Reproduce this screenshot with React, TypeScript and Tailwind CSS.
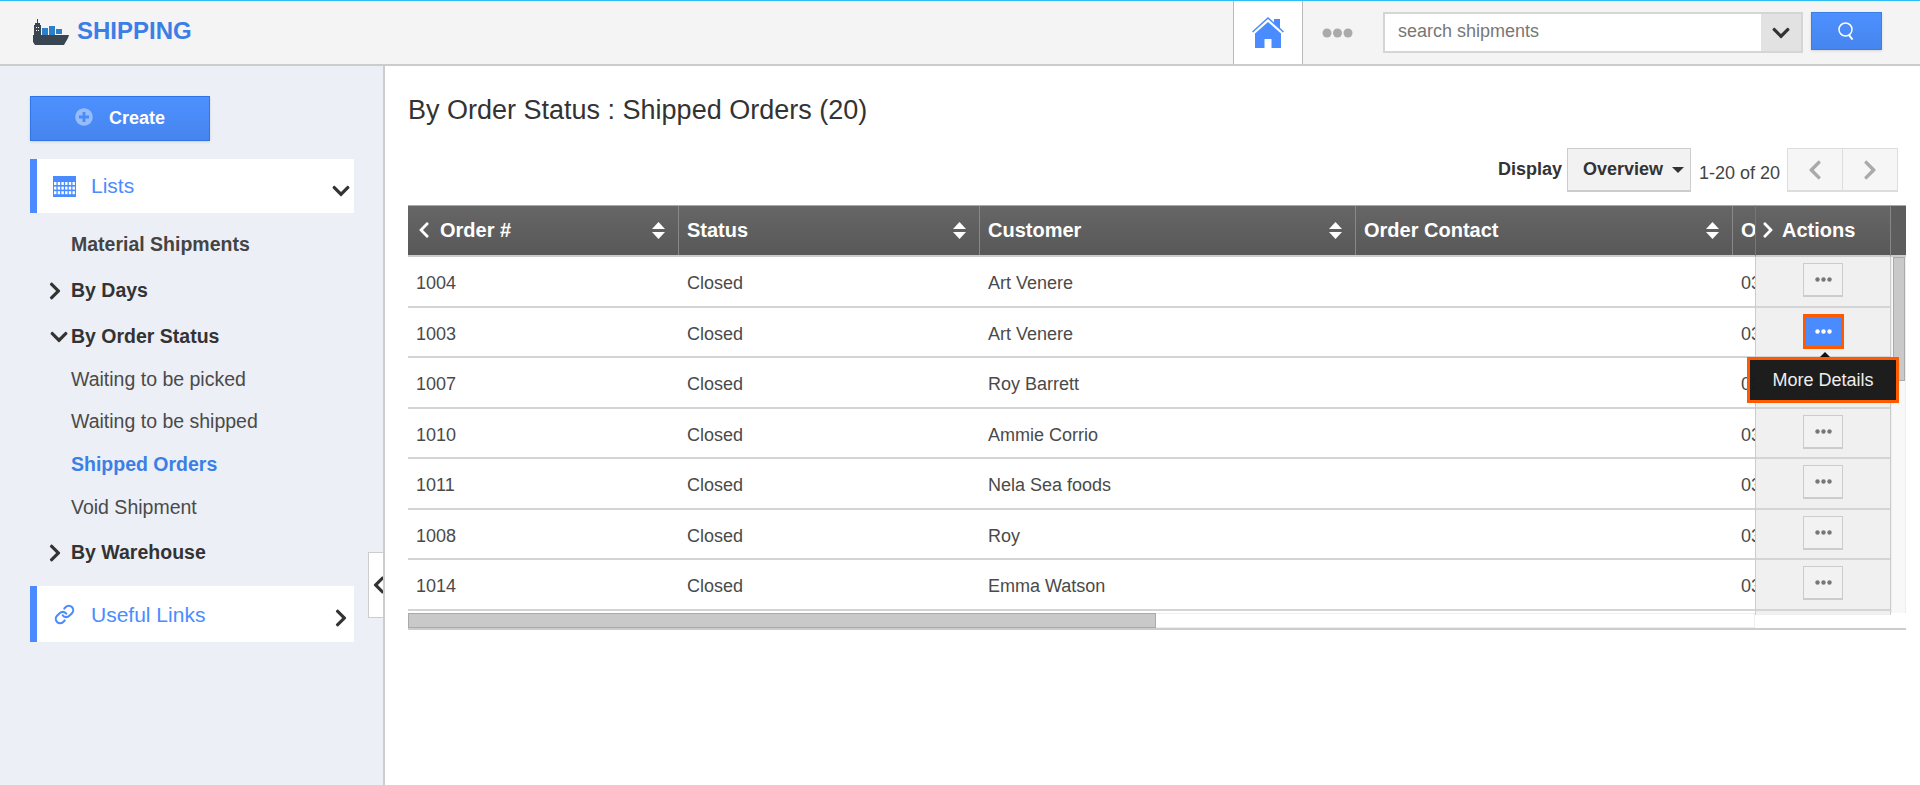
import { FaChevronDown, FaChevronLeft, FaChevronRight, FaPlusCircle } from "react-icons/fa";
import { Link } from "lucide-react";

const rows = [
  { id: "1004", customer: "Art Venere", h: "h-[51px]" },
  { id: "1003", customer: "Art Venere", h: "h-[50px]" },
  { id: "1007", customer: "Roy Barrett", h: "h-[51px]" },
  { id: "1010", customer: "Ammie Corrio", h: "h-[50px]" },
  { id: "1011", customer: "Nela Sea foods", h: "h-[51px]" },
  { id: "1008", customer: "Roy", h: "h-[50px]" },
  { id: "1014", customer: "Emma Watson", h: "h-[51px]" },
];

function ShipLogo() {
  return (
    <svg width="36" height="27" viewBox="0 0 36 27">
      <rect x="4" y="0" width="1" height="6" fill="#3a4552" />
      <rect x="2" y="4" width="5" height="2" fill="#3a4552" />
      <rect x="1" y="6" width="7" height="10" fill="#3a4552" />
      <rect x="3" y="8" width="1" height="1" fill="#fff" />
      <rect x="5" y="8" width="1" height="1" fill="#fff" />
      <rect x="3" y="11" width="1" height="1" fill="#fff" />
      <rect x="5" y="11" width="1" height="1" fill="#fff" />
      <rect x="9" y="9" width="6" height="7" fill="#2d7fc8" />
      <rect x="16" y="7" width="6" height="9" fill="#2d7fc8" />
      <rect x="23" y="10" width="6" height="5" fill="#2d7fc8" />
      <path d="M0 16 L36 16 L35 19 L31 26 L2 26 L0 23 Z" fill="#3a4552" />
    </svg>
  );
}

function HomeIcon() {
  return (
    <svg width="32" height="31" viewBox="0 0 32 31">
      <path d="M0.5 15 L16 1 L31.5 15" fill="none" stroke="#4a8cff" strokeWidth="1.5" />
      <path d="M22 2 h6 v10 l-6 -5.5 Z" fill="#4a8cff" />
      <path d="M16 5 L29 16.5 V31 H19.5 V22 H12.5 V31 H3 V16.5 Z" fill="#4a8cff" />
    </svg>
  );
}

function CalendarIcon() {
  return (
    <svg width="23" height="21" viewBox="0 0 23 21">
      <rect width="23" height="21" fill="#4a8cff" />
      {[0, 1, 2, 3, 4, 5].map((c) =>
        [0, 1, 2].map((r) => (
          <rect key={`${c}-${r}`} x={1 + c * 3.7} y={6 + r * 4.6} width="2.4" height="3" fill="#fff" />
        ))
      )}
    </svg>
  );
}

function SearchIcon() {
  return (
    <svg width="17" height="18" viewBox="0 0 17 18" fill="none" stroke="#fff" strokeWidth="1.5">
      <circle cx="7.5" cy="7.5" r="6.5" />
      <path d="M11 13 L14.5 17.5" strokeWidth="2" />
    </svg>
  );
}

function SortIcon() {
  return (
    <svg width="13" height="17" viewBox="0 0 13 17" fill="#fff">
      <path d="M6.5 0 L13 7 H0 Z" />
      <path d="M0 10 H13 L6.5 17 Z" />
    </svg>
  );
}

function Dots({ color }: { color: string }) {
  return (
    <svg width="17" height="5" viewBox="0 0 17 5" fill={color}>
      <circle cx="2.5" cy="2.5" r="2.2" />
      <circle cx="8.5" cy="2.5" r="2.2" />
      <circle cx="14.5" cy="2.5" r="2.2" />
    </svg>
  );
}

function SideHead({ label, chevron, icon, h, labelClass = "" }: { label: string; chevron: React.ReactNode; icon: React.ReactNode; h: string; labelClass?: string }) {
  return (
    <div className={`flex ${h} w-[324px] items-center border-l-[7px] border-[#4a8cff] bg-white`}>
      <div className="flex w-[54px] justify-center">{icon}</div>
      <span className={`flex-1 text-[21px] text-[#4a8cff] ${labelClass}`}>{label}</span>
      <div className="mr-[3px] text-[#333]">{chevron}</div>
    </div>
  );
}

function HeadCell({ label, w, before, sort = true }: { label: string; w: string; before?: React.ReactNode; sort?: boolean }) {
  return (
    <div className={`flex h-full ${w} shrink-0 items-center border-r border-[#888] pr-[13px]`}>
      {before}
      <span className={`mb-[2px] flex-1 whitespace-nowrap text-[20px] font-bold text-white ${before ? "ml-[7px]" : "pl-[8px]"}`}>
        {label}
      </span>
      {sort && <SortIcon />}
    </div>
  );
}

function Cell({ w, text }: { w: string; text?: string }) {
  return (
    <div className={`flex h-full ${w} shrink-0 items-center border-r border-white pl-[8px] pt-[4px] text-[18px] text-[#4a4a4a]`}>
      {text}
    </div>
  );
}

export default function App() {
  return (
    <div className="flex h-[785px] flex-col overflow-hidden bg-white font-['Liberation_Sans',Arial,sans-serif]">
      {/* top bar */}
      <header className="flex h-[66px] shrink-0 items-center border-t border-b-2 border-t-[#2dbdf5] border-b-[#ccc] bg-[#f4f4f4]">
        <div className="ml-[33px] flex items-center">
          <ShipLogo />
          <span className="mb-[3px] ml-[8px] text-[24px] font-bold text-[#3b7fe6]">SHIPPING</span>
        </div>
        <div className="ml-auto flex h-full items-stretch pr-[38px]">
          <div className="flex w-[70px] items-center justify-center border-x border-[#bbb] bg-white">
            <HomeIcon />
          </div>
          <div className="ml-[19px] flex items-center">
            <svg width="31" height="10" viewBox="0 0 31 10" fill="#aaa">
              <circle cx="5" cy="5" r="4.5" />
              <circle cx="15.5" cy="5" r="4.5" />
              <circle cx="26" cy="5" r="4.5" />
            </svg>
          </div>
          <div className="ml-[30px] mt-[11px] flex h-[41px] w-[420px] border-2 border-[#d5d5d5] bg-white">
            <span className="flex-1 pl-[13px] pt-[4px] text-[18px] text-[#777]">search shipments</span>
            <div className="flex w-[40px] items-center justify-center bg-[#e2e2e2]">
              <FaChevronDown className="text-[20px] text-[#333]" />
            </div>
          </div>
          <div className="ml-[8px] mt-[11px] flex h-[38px] w-[71px] items-center justify-center border border-[#3b7fe6] bg-gradient-to-b from-[#4d90ff] to-[#4585ee] shadow-sm">
            <SearchIcon />
          </div>
        </div>
      </header>

      <div className="flex min-h-0 flex-1">
        {/* sidebar */}
        <aside className="relative w-[385px] shrink-0 border-r-2 border-[#ccc] bg-[#eceff5] pl-[30px] pt-[30px]">
          <div className="flex h-[45px] w-[180px] items-center justify-center border border-[#2f75e8] bg-gradient-to-b from-[#4d90ff] to-[#4585ee] shadow-sm">
            <FaPlusCircle className="mb-[4px] text-[18px] text-[#95bcfb]" />
            <span className="ml-[16px] text-[18px] font-bold text-white">Create</span>
          </div>

          <div className="mt-[18px]">
            <SideHead h="h-[54px]" label="Lists" icon={<CalendarIcon />} chevron={<FaChevronDown className="mt-[10px] text-[20px]" />} />
          </div>

          <div className="mt-[9px] text-[19.5px]">
            <div className="flex h-[46px] items-center pl-[41px] font-bold text-[#444]">Material Shipments</div>
            <div className="flex h-[46px] items-center font-bold text-[#333]">
              <FaChevronRight className="ml-[15px] text-[20px]" />
              <span className="ml-[6px]">By Days</span>
            </div>
            <div className="flex h-[45px] items-center font-bold text-[#333]">
              <FaChevronDown className="ml-[19px] text-[20px]" />
              <span className="ml-[2px]">By Order Status</span>
            </div>
            <div className="flex h-[42px] items-center pl-[41px] text-[#4a4a4a]">Waiting to be picked</div>
            <div className="flex h-[42px] items-center pl-[41px] text-[#4a4a4a]">Waiting to be shipped</div>
            <div className="flex h-[44px] items-center pl-[41px] font-bold text-[#3b7fe6]">Shipped Orders</div>
            <div className="flex h-[42px] items-center pl-[41px] text-[#4a4a4a]">Void Shipment</div>
            <div className="mt-[1px] flex h-[46px] items-center font-bold text-[#333]">
              <FaChevronRight className="ml-[15px] text-[20px]" />
              <span className="ml-[6px]">By Warehouse</span>
            </div>
          </div>

          <div className="mt-[10px]">
            <SideHead
              h="h-[56px]"
              label="Useful Links"
              labelClass="pt-[2px]"
              icon={<Link size={21} strokeWidth={2.4} className="text-[#4a8cff]" />}
              chevron={<FaChevronRight className="mt-[7px] text-[20px]" />}
            />
          </div>

          {/* collapse handle */}
          <div className="absolute right-0 top-[486px] flex h-[66px] w-[15px] items-center overflow-hidden border-y border-l border-[#ccc] bg-white">
            <FaChevronLeft className="shrink-0 text-[20px] text-[#333]" />
          </div>
        </aside>

        {/* main */}
        <main className="flex-1 pl-[23px] pr-[14px] pt-[30px]">
          <h1 className="h-[30px] text-[27px] leading-[28px] text-[#333]">By Order Status : Shipped Orders (20)</h1>

          <div className="mt-[22px] flex h-[44px] items-start justify-end pr-[8px]">
            <span className="mt-[8px] text-[18px] font-bold text-[#333]">Display</span>
            <div className="ml-[5px] flex h-[44px] w-[124px] items-center justify-between border border-[#ccc] border-b-2 bg-[#f2f2f2] pl-[15px] pr-[6px]">
              <span className="text-[18px] font-bold text-[#333]">Overview</span>
              <span className="h-0 w-0 border-x-[6px] border-t-[6px] border-x-transparent border-t-[#333]" />
            </div>
            <span className="ml-[8px] mt-[12px] text-[18px] text-[#444]">1-20 of 20</span>
            <div className="ml-[7px] flex h-[44px] w-[111px] border border-b-2 border-[#ddd] bg-[#f6f6f6]">
              <div className="flex flex-1 items-center justify-center border-r border-[#ddd]">
                <FaChevronLeft className="text-[22px] text-[#aaa]" />
              </div>
              <div className="flex flex-1 items-center justify-center">
                <FaChevronRight className="text-[22px] text-[#aaa]" />
              </div>
            </div>
          </div>

          {/* grid */}
          <div className="mt-[13px] flex border-b-2 border-[#ccc]">
            <div className="w-[1347px] shrink-0 overflow-hidden">
              <div className="w-[1500px]">
                <div className="flex h-[52px] items-stretch border-b-2 border-t border-b-[#ccc] border-t-[#aaa] bg-gradient-to-b from-[#666] to-[#585858]">
                  <HeadCell
                    w="w-[271px]"
                    label="Order #"
                    before={<FaChevronLeft className="mb-[2px] ml-[7px] text-[18px] text-white" />}
                  />
                  <HeadCell w="w-[301px]" label="Status" />
                  <HeadCell w="w-[376px]" label="Customer" />
                  <HeadCell w="w-[377px]" label="Order Contact" />
                  <HeadCell w="w-[120px]" label="Order Date" sort={false} />
                </div>
                {rows.map((r) => (
                  <div key={r.id} className={`flex ${r.h} items-center border-b-2 border-[#d4d4d4]`}>
                    <Cell w="w-[271px]" text={r.id} />
                    <Cell w="w-[301px]" text="Closed" />
                    <Cell w="w-[376px]" text={r.customer} />
                    <Cell w="w-[377px]" />
                    <Cell w="w-[120px]" text="03/12/2019" />
                  </div>
                ))}
              </div>
              <div className="mt-[2px] h-[15px] border border-[#eee]">
                <div className="-mt-px ml-[-1px] h-[15px] w-[748px] border border-[#aaa] bg-[#c9c9c9]" />
              </div>
            </div>

            <div className="relative w-[136px] shrink-0">
              <div className="flex h-[52px] items-center border-b-2 border-l border-r border-t border-b-[#ccc] border-l-[#777] border-r-[#888] border-t-[#aaa] bg-gradient-to-b from-[#666] to-[#585858]">
                <FaChevronRight className="mb-[2px] ml-[3px] text-[18px] text-white" />
                <span className="mb-[2px] ml-[5px] text-[20px] font-bold text-white">Actions</span>
              </div>
              <div className="h-[358px] overflow-hidden border-x border-[#ccc] bg-[#f0f0f0]">
                {rows.map((r, i) => (
                  <div key={r.id} className={`flex ${r.h} justify-center border-b-2 border-[#d4d4d4] pt-[6px]`}>
                    {i === 1 ? (
                      <div className="flex h-[35px] w-[41px] items-center justify-center border-[3px] border-[#ff5a00] bg-[#4a8cff]">
                        <Dots color="#fff" />
                      </div>
                    ) : (
                      <div className="flex h-[34px] w-[40px] items-center justify-center border border-b-2 border-[#ccc] bg-[#f2f2f2]">
                        <Dots color="#777" />
                      </div>
                    )}
                  </div>
                ))}
              </div>

              {/* tooltip */}
              <div className="absolute left-[-8px] top-[152px] flex h-[46px] w-[152px] items-center justify-center border-[3px] border-[#ff5a00] bg-[#181818]/98 text-[18px] text-[#eee]">
                <span className="absolute left-[70px] top-[-8px] h-0 w-0 border-x-[5px] border-b-[5px] border-x-transparent border-b-[#111]" />
                More Details
              </div>
            </div>

            <div className="flex-1">
              <div className="h-[52px] border-b-2 border-t border-b-[#ccc] border-t-[#aaa] bg-[#5d5d5d]" />
              <div className="h-[356px] border-x border-[#eee] bg-[#f8f8f8]">
                <div className="ml-[1px] h-[124px] border border-[#aaa] bg-[#c9c9c9]" />
              </div>
            </div>
          </div>
        </main>
      </div>
    </div>
  );
}
